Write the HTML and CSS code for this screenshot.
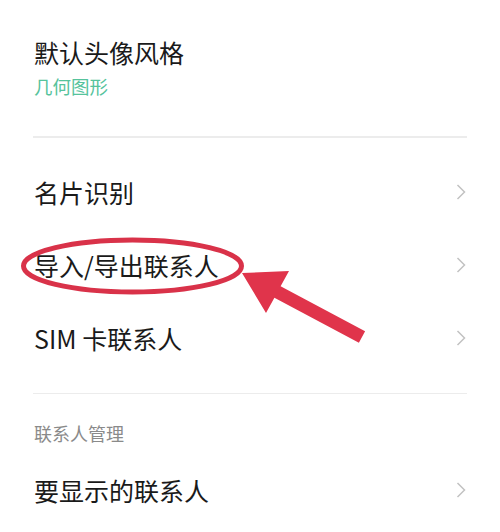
FILE: index.html
```html
<!DOCTYPE html>
<html>
<head>
    <title>联系人设置</title>
    <link rel="stylesheet" href="styles.css">
</head>
<body>
    <div class="page">
        <div class="item two-line">
            <div class="title">默认头像风格</div>
            <div class="sub">几何图形</div>
        </div>
        <div class="divider"></div>

        <div class="group">
            <div class="row">
                <span class="title">名片识别</span>
                <svg class="chevron" viewBox="0 0 10 16"><polyline points="1.5,1 8.5,8 1.5,15"/></svg>
            </div>
            <div class="row">
                <span class="title">导入/导出联系人</span>
                <svg class="chevron" viewBox="0 0 10 16"><polyline points="1.5,1 8.5,8 1.5,15"/></svg>
            </div>
            <div class="row">
                <span class="title">SIM 卡联系人</span>
                <svg class="chevron" viewBox="0 0 10 16"><polyline points="1.5,1 8.5,8 1.5,15"/></svg>
            </div>
        </div>
        <div class="divider"></div>

        <div class="section-title">联系人管理</div>
        <div class="row last">
            <span class="title">要显示的联系人</span>
            <svg class="chevron" viewBox="0 0 10 16"><polyline points="1.5,1 8.5,8 1.5,15"/></svg>
        </div>

        <!-- 标注：红圈 + 箭头 -->
        <svg class="mark" viewBox="0 0 500 532">
            <ellipse cx="132.5" cy="266" rx="109" ry="26" />
            <polygon points="242,273 289,271 280.6,286.3 365.1,331.3 358.9,342.7 274.4,297.7 266,313" />
        </svg>
    </div>
</body>
</html>
```

FILE: styles.css
```css
body {
    margin: 0;
    background: #fff;
    font-family: 'Noto Sans CJK SC', 'Noto Sans', sans-serif;
    color: #1a1a1a;
}
.page {
    position: relative;
    width: 500px;
    height: 532px;
    overflow: hidden;
}
.item.two-line {
    padding: 36px 33px 37px 34px;
}
.title {
    font-size: 25px;
    line-height: 32px;
    color: #1a1a1a;
}
.sub {
    margin-top: 5px;
    font-size: 18.5px;
    line-height: 26px;
    color: #56c39c;
}
.divider {
    height: 1.5px;
    background: #ececec;
    margin: 0 33px 0 33px;
}
.group {
    padding: 18px 0 18px 0;
}
.row {
    height: 73px;
    padding: 0 34px 0 34px;
    display: flex;
    align-items: center;
    justify-content: space-between;
}
.row.last {
    margin-top: 8.5px;
}
.chevron {
    width: 10px;
    height: 16px;
    fill: none;
    stroke: #c2c2c2;
    stroke-width: 1.5;
}
.section-title {
    padding: 27px 34px 0 34px;
    font-size: 18px;
    line-height: 24px;
    color: #8a8a8a;
}
.mark {
    position: absolute;
    left: 0;
    top: 0;
    width: 500px;
    height: 532px;
    pointer-events: none;
}
.mark ellipse {
    fill: none;
    stroke: #d93249;
    stroke-width: 5;
}
.mark polygon {
    fill: #e0344b;
}
```
